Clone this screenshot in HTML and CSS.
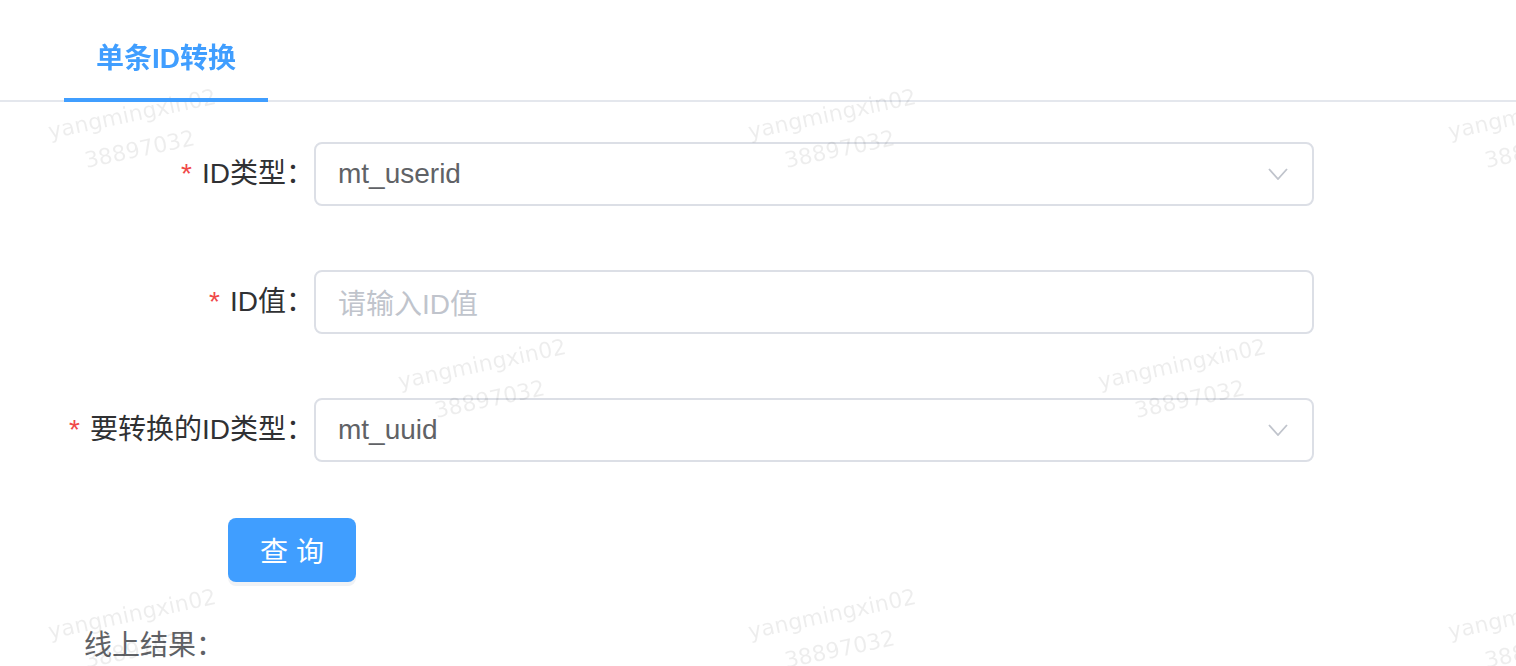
FILE: index.html
```html
<!DOCTYPE html>
<html lang="zh-CN">
<head>
<meta charset="utf-8">
<title>单条ID转换</title>
<link rel="stylesheet" href="styles.css">
</head>
<body>
<div class="page">
  <div class="tabs">
    <div class="tab-nav">
      <div class="tab is-active">单条ID转换</div>
    </div>
  </div>

  <form class="form">
    <div class="form-item">
      <label class="form-label"><span class="required">*</span>ID类型：</label>
      <div class="form-content">
        <div class="select">
          <span class="select-value">mt_userid</span>
          <svg class="select-arrow" width="20" height="12" viewBox="0 0 20 12"><polyline points="1,1 10,11 19,1" fill="none" stroke="#c0c4cc" stroke-width="1.8"/></svg>
        </div>
      </div>
    </div>

    <div class="form-item">
      <label class="form-label"><span class="required">*</span>ID值：</label>
      <div class="form-content">
        <div class="input"><span class="placeholder">请输入ID值</span></div>
      </div>
    </div>

    <div class="form-item">
      <label class="form-label"><span class="required">*</span>要转换的ID类型：</label>
      <div class="form-content">
        <div class="select">
          <span class="select-value">mt_uuid</span>
          <svg class="select-arrow" width="20" height="12" viewBox="0 0 20 12"><polyline points="1,1 10,11 19,1" fill="none" stroke="#c0c4cc" stroke-width="1.8"/></svg>
        </div>
      </div>
    </div>

    <div class="actions">
      <button type="button" class="btn-primary">查 询</button>
    </div>

    <div class="result">
      <span class="result-label">线上结果：</span>
    </div>
  </form>
</div>

<div class="watermarks">
  <div class="wm wm-1"><div>yangmingxin02</div><div>38897032</div></div>
  <div class="wm wm-2"><div>yangmingxin02</div><div>38897032</div></div>
  <div class="wm wm-3"><div>yangmingxin02</div><div>38897032</div></div>
  <div class="wm wm-4"><div>yangmingxin02</div><div>38897032</div></div>
  <div class="wm wm-5"><div>yangmingxin02</div><div>38897032</div></div>
  <div class="wm wm-6"><div>yangmingxin02</div><div>38897032</div></div>
  <div class="wm wm-7"><div>yangmingxin02</div><div>38897032</div></div>
  <div class="wm wm-8"><div>yangmingxin02</div><div>38897032</div></div>
</div>
</body>
</html>
```

FILE: styles.css
```css
html, body {
  margin: 0;
  padding: 0;
  background: #ffffff;
}

body {
  font-family: "Liberation Sans", "Noto Sans CJK SC", sans-serif;
  color: #303133;
  overflow: hidden;
}

.page {
  width: 1516px;
  height: 666px;
}

.tab-nav {
  display: flex;
  padding-top: 20px;
  padding-left: 64px;
  border-bottom: 2px solid #e4e7ed;
  height: 80px;
}

.tab {
  position: relative;
  z-index: 1;
  height: 82px;
  box-sizing: border-box;
  padding: 0 32px;
  line-height: 78px;
  font-size: 28px;
  font-weight: bold;
  color: #409eff;
  border-bottom: 4px solid #409eff;
}

.form {
  margin: 40px 0 0 0;
}

.form-item {
  display: flex;
  height: 64px;
  margin-bottom: 64px;
}

.form-label {
  width: 314px;
  box-sizing: border-box;
  padding-right: 0;
  text-align: right;
  font-size: 28px;
  line-height: 64px;
  color: #303133;
}

.required {
  color: #f04848;
  margin-right: 10px;
}

.form-content {
  width: 1000px;
}

.select,
.input {
  display: flex;
  align-items: center;
  height: 64px;
  box-sizing: border-box;
  border: 2px solid #dcdfe6;
  border-radius: 8px;
  padding: 0 24px 0 22px;
  font-size: 28px;
  color: #606266;
}

.select-value {
  flex: 1;
}

.placeholder {
  color: #c0c4cc;
}

.select-arrow {
  display: block;
}

.actions {
  margin-top: -8px;
  padding-left: 228px;
}

.btn-primary {
  width: 128px;
  height: 64px;
  border: none;
  border-radius: 8px;
  background: #409eff;
  color: #ffffff;
  font-family: "Liberation Sans", "Noto Sans CJK SC", sans-serif;
  font-size: 28px;
  padding: 0;
  box-shadow: 0 4px 0 #f0f2f5;
  cursor: pointer;
}

.result {
  margin-top: 32px;
  padding-left: 84px;
  line-height: 64px;
}

.result-label {
  font-size: 28px;
  color: #606266;
}

.watermarks {
  position: fixed;
  inset: 0;
  pointer-events: none;
  overflow: hidden;
}

.wm {
  position: absolute;
  width: 240px;
  margin-left: -120px;
  margin-top: -36px;
  text-align: center;
  font-family: "DejaVu Sans", sans-serif;
  font-size: 22px;
  line-height: 36px;
  color: rgba(0, 0, 0, 0.07);
  transform: rotate(-12deg);
  white-space: nowrap;
}

.wm-1 { left: 136px; top: 132px; }
.wm-2 { left: 836px; top: 132px; }
.wm-3 { left: 1536px; top: 132px; }
.wm-4 { left: 486px; top: 382px; }
.wm-5 { left: 1186px; top: 382px; }
.wm-6 { left: 136px; top: 632px; }
.wm-7 { left: 836px; top: 632px; }
.wm-8 { left: 1536px; top: 632px; }
```
